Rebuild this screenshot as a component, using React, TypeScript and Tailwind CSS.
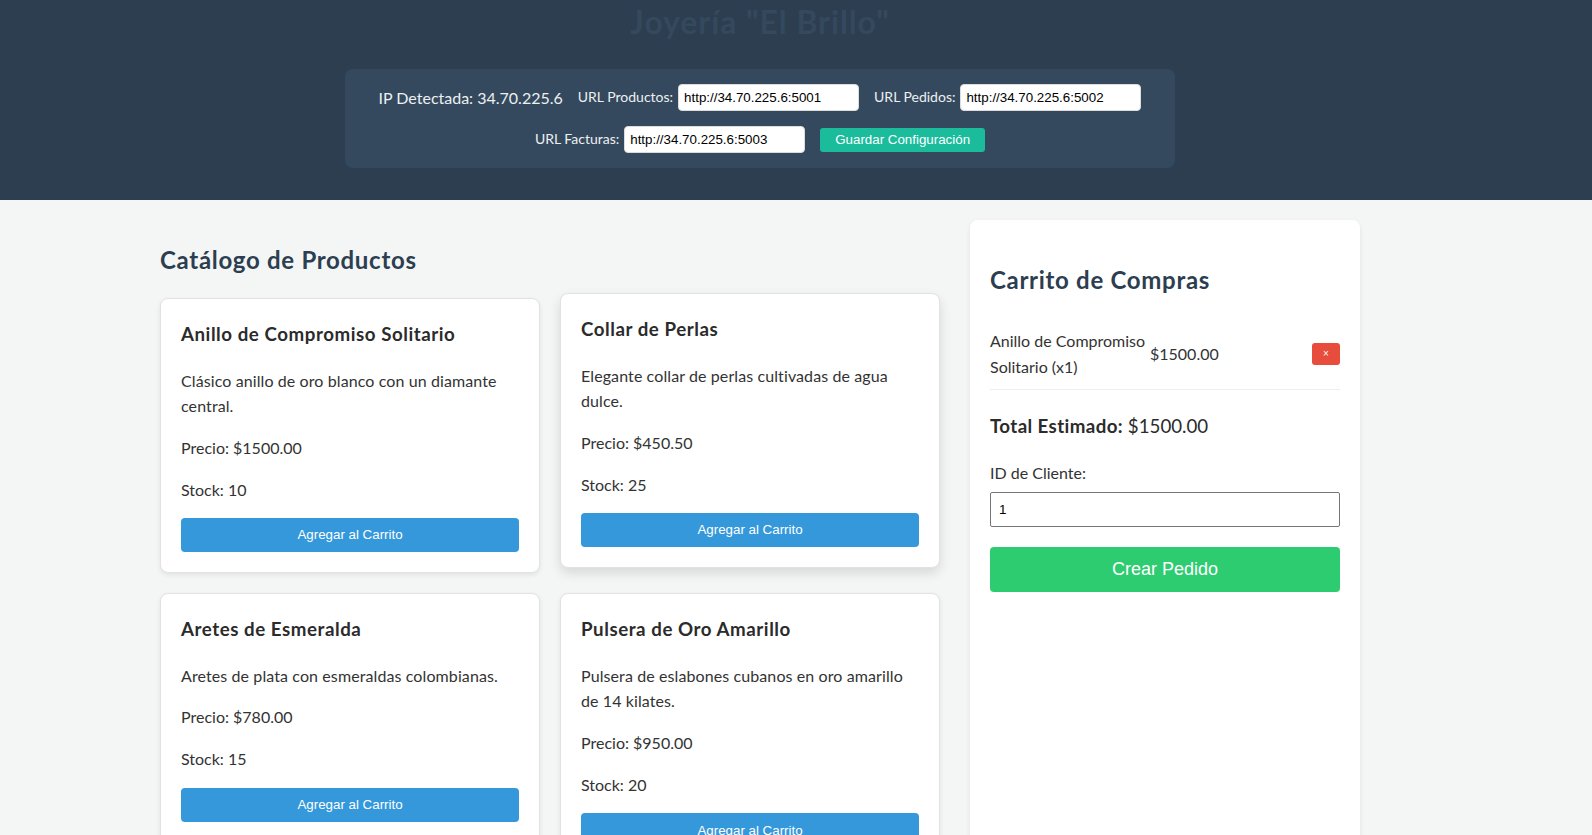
import React from 'react';

interface Product {
  id: number;
  name: string;
  description: string;
  price: number;
  stock: number;
}

const products: Product[] = [
  { id: 1, name: 'Anillo de Compromiso Solitario', description: 'Clásico anillo de oro blanco con un diamante central.', price: 1500, stock: 10 },
  { id: 2, name: 'Collar de Perlas', description: 'Elegante collar de perlas cultivadas de agua dulce.', price: 450.5, stock: 25 },
  { id: 3, name: 'Aretes de Esmeralda', description: 'Aretes de plata con esmeraldas colombianas.', price: 780, stock: 15 },
  { id: 4, name: 'Pulsera de Oro Amarillo', description: 'Pulsera de eslabones cubanos en oro amarillo de 14 kilates.', price: 950, stock: 20 },
];

const ConfigField: React.FC<{ label: string; value: string }> = ({ label, value }) => (
  <div className="flex items-center gap-[5px]">
    <label className="text-[14px]">{label}</label>
    <input
      defaultValue={value}
      className="w-[181px] h-[27px] px-[5px] rounded-[4px] border border-[#dcdcdc] bg-white text-black text-[13.33px] font-['Liberation_Sans',Arial,sans-serif] outline-none"
    />
  </div>
);

const ProductCard: React.FC<{ product: Product; hovered?: boolean }> = ({ product, hovered }) => (
  <div
    className={`bg-white border border-[#e2e2e2] rounded-lg p-5 ${
      hovered ? '-translate-y-[5px] shadow-[0_5px_12px_rgba(0,0,0,0.12)]' : 'shadow-[0_2px_5px_rgba(0,0,0,0.08)]'
    }`}
  >
    <h3 className="text-[18.72px] font-bold leading-[30px] tracking-[0.55px] mb-[18.72px] text-[#2b2b2b]">{product.name}</h3>
    <p className="mb-4 tracking-[0.1px]">{product.description}</p>
    <p className="mb-4">Precio: ${product.price.toFixed(2)}</p>
    <p className="mb-4">Stock: {product.stock}</p>
    <button className="w-full h-[34px] bg-[#3498db] text-white rounded-[4px] text-[13.33px] font-['Liberation_Sans',Arial,sans-serif]">
      Agregar al Carrito
    </button>
  </div>
);

export default function App() {
  return (
    <div className="min-h-screen bg-[#f4f6f6] text-[#333] text-base leading-[1.6] font-['Lato','Noto_Sans',sans-serif]">
      <header className="bg-[#2c3e50] pb-[32px]">
        <div className="w-[1520px] flex flex-col items-center">
          <h1 className="text-[32px] font-bold leading-[44px] tracking-[0.9px] text-[#34495e]">Joyería "El Brillo"</h1>
          <div className="mt-[25px] w-[830px] bg-[#34495e] rounded-lg p-[15px] flex flex-wrap justify-center items-center gap-[15px] text-[#ecf0f1]">
            <span className="text-base">IP Detectada: 34.70.225.6</span>
            <ConfigField label="URL Productos:" value="http://34.70.225.6:5001" />
            <ConfigField label="URL Pedidos:" value="http://34.70.225.6:5002" />
            <ConfigField label="URL Facturas:" value="http://34.70.225.6:5003" />
            <button className="h-[24px] px-[15px] bg-[#1abc9c] text-white rounded-[3px] text-[13.33px] font-['Liberation_Sans',Arial,sans-serif]">
              Guardar Configuración
            </button>
          </div>
        </div>
      </header>

      <main className="w-[1200px] ml-[160px] pt-5 grid grid-cols-[780px_390px] gap-[30px]">
        <section>
          <h2 className="mt-[21px] mb-[19px] text-2xl font-bold leading-[38px] tracking-[0.7px] text-[#2c3e50]">Catálogo de Productos</h2>
          <div className="grid grid-cols-2 gap-5">
            {products.map((p) => (
              <ProductCard key={p.id} product={p} hovered={p.id === 2} />
            ))}
          </div>
        </section>

        <aside className="bg-white rounded-lg p-5 shadow-[0_2px_5px_rgba(0,0,0,0.08)]">
          <h2 className="mt-[21px] mb-[19px] text-2xl font-bold leading-[38px] tracking-[0.7px] text-[#2c3e50]">Carrito de Compras</h2>
          <div className="flex items-center py-[10px] border-b border-[#eee]">
            <span className="w-[160px]">Anillo de Compromiso Solitario (x1)</span>
            <span>$1500.00</span>
            <button className="ml-auto w-[28px] h-[22px] bg-[#e74c3c] text-white rounded-[3px] text-[10px] leading-none font-['Liberation_Sans',Arial,sans-serif]">
              ×
            </button>
          </div>
          <h3 className="mt-[21px] mb-[19px] text-[18.72px] leading-[30px] text-[#2b2b2b]">
            <strong className="tracking-[0.4px]">Total Estimado:</strong> $1500.00
          </h3>
          <label className="block mt-[3px]">ID de Cliente:</label>
          <input
            defaultValue="1"
            className="mt-[6px] w-full h-[35px] px-[8px] border border-[#767676] rounded-[2px] text-[13.33px] text-black font-['Liberation_Sans',Arial,sans-serif] outline-none"
          />
          <button className="mt-5 w-full h-[45px] bg-[#2ecc71] text-white rounded-[4px] text-[18px] font-['Liberation_Sans',Arial,sans-serif]">
            Crear Pedido
          </button>
        </aside>
      </main>
    </div>
  );
}
